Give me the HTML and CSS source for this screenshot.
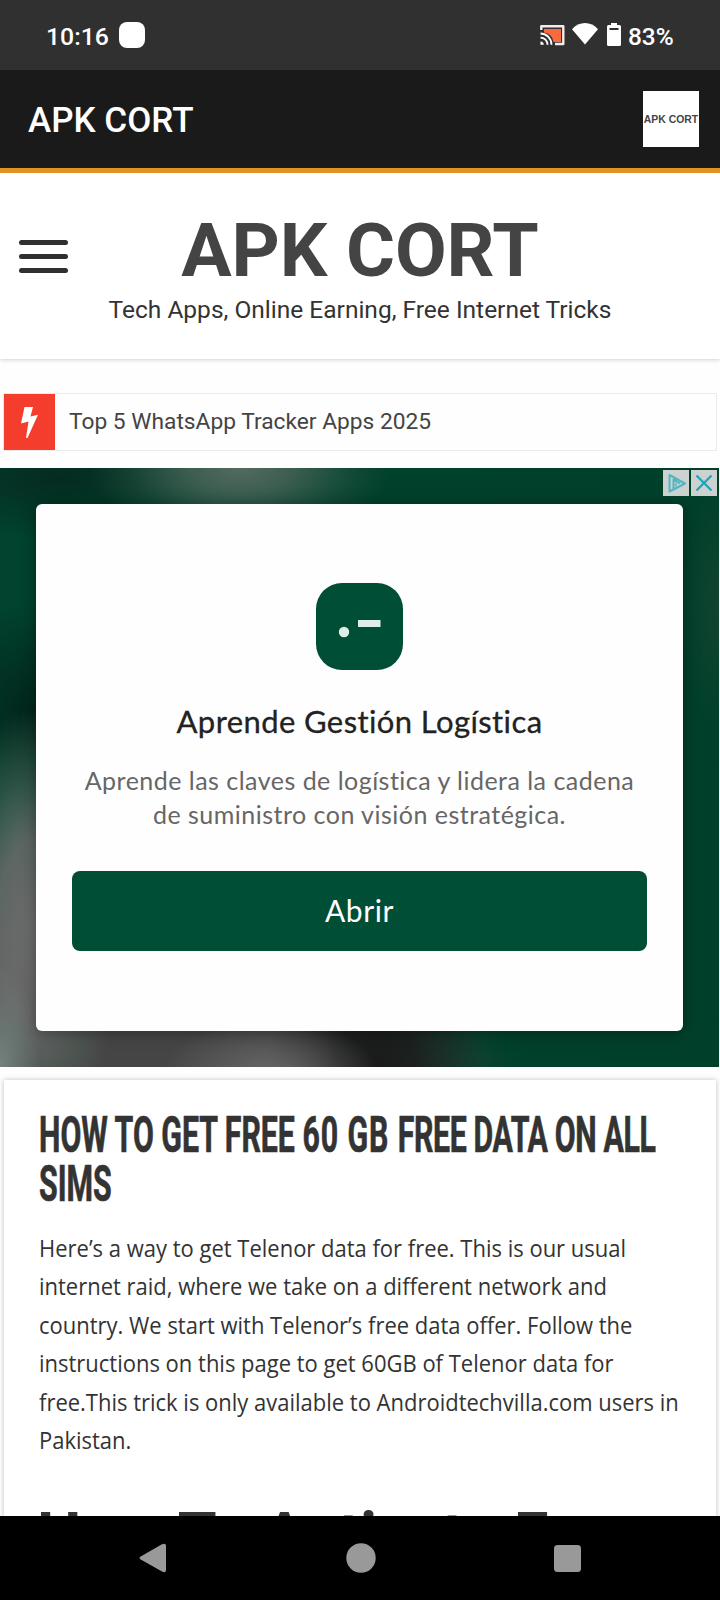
FILE: index.html
```html
<!DOCTYPE html>
<html lang="en">
<head>
<meta charset="utf-8">
<title>APK CORT</title>
<link rel="stylesheet" href="styles.css">
</head>
<body>
<div class="screen">
  <div class="status">
    <span class="clock">10:16</span>
    <span class="notif"></span>
    <span class="status-icons">
      <svg class="cast" width="25" height="21" viewBox="0 0 25 21">
        <path d="M4 4H21V17H13.5A10.5 10.5 0 0 0 4 7.500Z" fill="#f96b3f"/>
        <path d="M1.300 5V1.300H23.300V19H15" fill="none" stroke="#f4ecea" stroke-width="2.400" stroke-linejoin="round"/>
        <path d="M.5 8.500A11 11 0 0 1 11.500 19.700M.5 12.600A7 7 0 0 1 7.500 19.700" fill="none" stroke="#fff" stroke-width="1.900"/>
        <path d="M.5 16.400A3.500 3.500 0 0 1 3.800 19.800H.5Z" fill="#fff"/>
      </svg>
      <svg class="wifi" width="26" height="22" viewBox="0 0 26 22"><path d="M0 6.200C7-2 19-2 26 6.200L13 21.500Z" fill="#fff"/></svg>
      <svg class="batt" width="14" height="23" viewBox="0 0 14 23"><path d="M4 0H10V2H12.500Q14 2 14 3.500V21.500Q14 23 12.500 23H1.500Q0 23 0 21.500V3.500Q0 2 1.500 2H4Z" fill="#fff"/><path d="M2.500 5H11.500V7H2.500Z" fill="#303030"/></svg>
      <span class="pct">83%</span>
    </span>
  </div>
  <header class="appbar">
    <span class="app-title">APK CORT</span>
    <span class="app-logo">APK CORT</span>
  </header>
  <main class="page">
    <div class="site-head">
      <div class="burger"><i></i><i></i><i></i></div>
      <div class="brand">
        <h1>APK CORT</h1>
        <p>Tech Apps, Online Earning, Free Internet Tricks</p>
      </div>
    </div>
    <div class="ticker">
      <div class="bolt"><svg width="17" height="31" viewBox="0 0 17 31"><path d="M3.500 0H12L9.500 9.500L17 7.700L6.500 31H5L7.500 14.500L0 16.500Z" fill="#fff"/></svg></div>
      <span class="ticker-text">Top 5 WhatsApp Tracker Apps 2025</span>
    </div>
    <section class="ad">
      <div class="ad-card">
        <svg class="ad-icon" width="87" height="87" viewBox="0 0 87 87"><rect width="87" height="87" rx="26" fill="#004e35"/><circle cx="28" cy="49" r="5.200" fill="#dceee6"/><rect x="42" y="37" width="22.500" height="7" fill="#dceee6"/></svg>
        <h2>Aprende Gestión Logística</h2>
        <p>Aprende las claves de logística y lidera la cadena<br>de suministro con visión estratégica.</p>
        <div class="cta">Abrir</div>
      </div>
      <div class="ad-ctl">
        <svg width="26" height="26" viewBox="0 0 26 26"><path d="M10.500 19.500L6.500 21.500V5L22 13.500L10.500 19.500V9.500L17 13.500" fill="none" stroke="#4fb6c4" stroke-width="2" stroke-linejoin="round"/><path d="M13 13V16.500" stroke="#4fb6c4" stroke-width="1.500"/></svg>
        <svg width="26" height="26" viewBox="0 0 26 26"><path d="M5.500 5.500L20.500 20.500M20.500 5.500L5.500 20.500" stroke="#1ea5bd" stroke-width="2.300"/></svg>
      </div>
    </section>
    <article class="post">
      <h2 class="post-title">HOW TO GET FREE <span class="loose">60 GB </span><span class="tight">FREE DATA ON ALL</span><br>SIMS</h2>
      <p class="post-text">Here’s a way to get Telenor data for free. This is our usual<br>internet raid, where we take on a different network and<br>country. We start with Telenor’s free data offer. Follow the<br>instructions on this page to get 60GB of Telenor data for<br>free.This trick is only available to Androidtechvilla.com users in<br>Pakistan.</p>
      <h3>How To Activate Free</h3>
    </article>
  </main>
  <nav class="navbar">
    <svg width="28" height="30" viewBox="0 0 28 30"><path d="M23 1.300Q27 -.5 27 3V27Q27 30.500 23 28.600L1.700 16.500Q-.5 15 1.700 13.500Z" fill="#999"/></svg>
    <svg width="30" height="30" viewBox="0 0 30 30"><circle cx="15" cy="15" r="14.700" fill="#999"/></svg>
    <svg width="27" height="27" viewBox="0 0 27 27"><rect width="27" height="27" rx="3.500" fill="#999"/></svg>
  </nav>
</div>
</body>
</html>
```
FILE: styles.css
```css
* { box-sizing: border-box; }
body { margin: 0; background: #fff; font-family: Roboto, sans-serif; }
h1, h2, h3, p { margin: 0; }
svg { display: block; flex: none; }
.screen { width: 720px; height: 1600px; display: flex; flex-direction: column; overflow: hidden; }

.status { height: 70px; flex: none; background: #303030; color: #fff; display: flex; align-items: flex-start; padding: 0 46px 0 46px; font-size: 24.8px; font-weight: 500; }
.clock, .pct { line-height: 29px; margin-top: 22px; }
.clock { width: 62px; }
.notif { width: 26px; height: 26px; border-radius: 8px; background: #fff; margin: 22px 0 0 11px; }
.status-icons { display: flex; margin-left: auto; }
.cast { margin-top: 25px; }
.wifi { margin: 23px 0 0 7px; }
.batt { margin: 23px 7px 0 9px; }
.pct { width: 46px; font-size: 24.4px; }

.appbar { height: 103px; flex: none; background: #1a1a1a; border-bottom: 5px solid #e19221; display: flex; align-items: center; justify-content: space-between; padding: 0 21px 0 28px; color: #fff; }
.app-title { font-size: 35px; font-weight: 500; line-height: 42px; margin-top: 3px; }
.app-logo { width: 56px; height: 56px; background: #fff; color: #444; display: flex; align-items: center; justify-content: center; font: bold 10.4px "Liberation Sans", sans-serif; white-space: nowrap; }

.page { height: 1343px; flex: none; overflow: hidden; background: #fefefe; }
.site-head { height: 186px; background: #fff; box-shadow: 0 1px 4px rgba(0,0,0,.18); display: flex; padding-left: 19px; }
.burger { width: 49px; height: 33px; margin-top: 67px; display: flex; flex-direction: column; justify-content: space-between; }
.burger i { height: 5px; border-radius: 3px; background: #303030; }
.brand { flex: 1; margin-left: -68px; text-align: center; }
.brand h1 { font-size: 75px; font-weight: 700; line-height: 88px; margin-top: 33px; color: #444; letter-spacing: -.1px; }
.brand p { font-size: 24.5px; line-height: 29px; margin-top: 1px; color: #333; }
.ticker { height: 58px; margin: 34px 3px 0; border: 1px solid #eaeaea; display: flex; align-items: center; font-size: 22.75px; color: #444; padding-right: 10px; }
.ticker-text { padding-bottom: 2px; }
.bolt { width: 51px; height: 56px; background: #f53d2d; margin-right: 14px; display: flex; align-items: center; justify-content: center; }

.ad { position: relative; width: 719px; height: 599px; margin-top: 17px; padding: 36px 36px 0 36px;
  background:
    radial-gradient(ellipse 150px 75px at 240px 0, #546a5f 0, rgba(84,106,95,.7) 35%, rgba(84,106,95,.2) 75%, rgba(84,106,95,0) 100%),
    radial-gradient(ellipse 40px 100px at 0 599px, #74837d 0, rgba(116,131,125,0) 100%),
    radial-gradient(ellipse 110px 60px at 270px 610px, #696969 0, rgba(105,105,105,0) 100%),
    radial-gradient(ellipse 110px 130px at 375px 599px, #1a1a1a 0, rgba(26,26,26,.85) 35%, rgba(26,26,26,0) 100%),
    radial-gradient(ellipse 90px 220px at 32px 460px, #6c6c6c 0, rgba(108,108,108,.85) 40%, rgba(88,108,98,.45) 70%, rgba(108,108,108,0) 100%),
    radial-gradient(ellipse 460px 190px at 60px 620px, #454545 0, #454545 60%, rgba(69,69,69,0) 100%),
    radial-gradient(ellipse 90px 110px at 30px 245px, #02251b 0, rgba(2,37,27,0) 100%),
    radial-gradient(ellipse 160px 60px at 60px 10px, #052b20 0, rgba(5,43,32,0) 100%),
    radial-gradient(ellipse 40px 120px at 719px 140px, #12432f 0, rgba(18,67,47,0) 100%),
    linear-gradient(90deg, #00432e, #00402b); }
.ad-card { height: 527px; background: #fefefe; border-radius: 6px; box-shadow: 0 2px 16px rgba(0,0,0,.35); padding: 79px 36px 0; text-align: center; font-family: Lato, sans-serif; white-space: nowrap; }
.ad-icon { margin: 0 auto; }
.ad-card h2 { font-size: 31px; font-weight: 400; letter-spacing: .4px; -webkit-text-stroke: .3px #222; color: #222; line-height: 40px; margin-top: 31px; }
.ad-card p { font-size: 25px; letter-spacing: .48px; line-height: 34px; color: #666; margin-top: 22px; }
.cta { height: 80px; border-radius: 8px; background: #004e35; color: #fff; font-size: 30px; letter-spacing: .6px; line-height: 78px; margin-top: 40px; }
.ad-ctl { position: absolute; top: 2px; right: 2px; display: flex; gap: 2px; }
.ad-ctl svg { background: #cdd2d0; }

.post { height: 520px; margin: 13px 4px 0; padding: 31px 35px 0; background: #fff; box-shadow: 0 0 5px rgba(0,0,0,.25); color: #333; white-space: nowrap; }
.post-title { font-size: 49.5px; font-weight: 700; line-height: 49px; -webkit-text-stroke: .7px #333; transform: scaleX(.612); transform-origin: 0 0; }
.loose { letter-spacing: 1.5px; }
.tight { letter-spacing: -.6px; }
.post-text { font: 24px/38.4px "Open Sans", sans-serif; transform: scaleX(.916); transform-origin: 0 0; margin: 20px 0 0 -.5px; }
.post h3 { font-size: 62.8px; font-weight: 700; line-height: 74px; letter-spacing: .25px; margin: 40px 0 0 -2px; }

.navbar { height: 84px; flex: none; background: #000; display: flex; align-items: center; padding: 0 139px 0 139px; justify-content: space-between; }
```
